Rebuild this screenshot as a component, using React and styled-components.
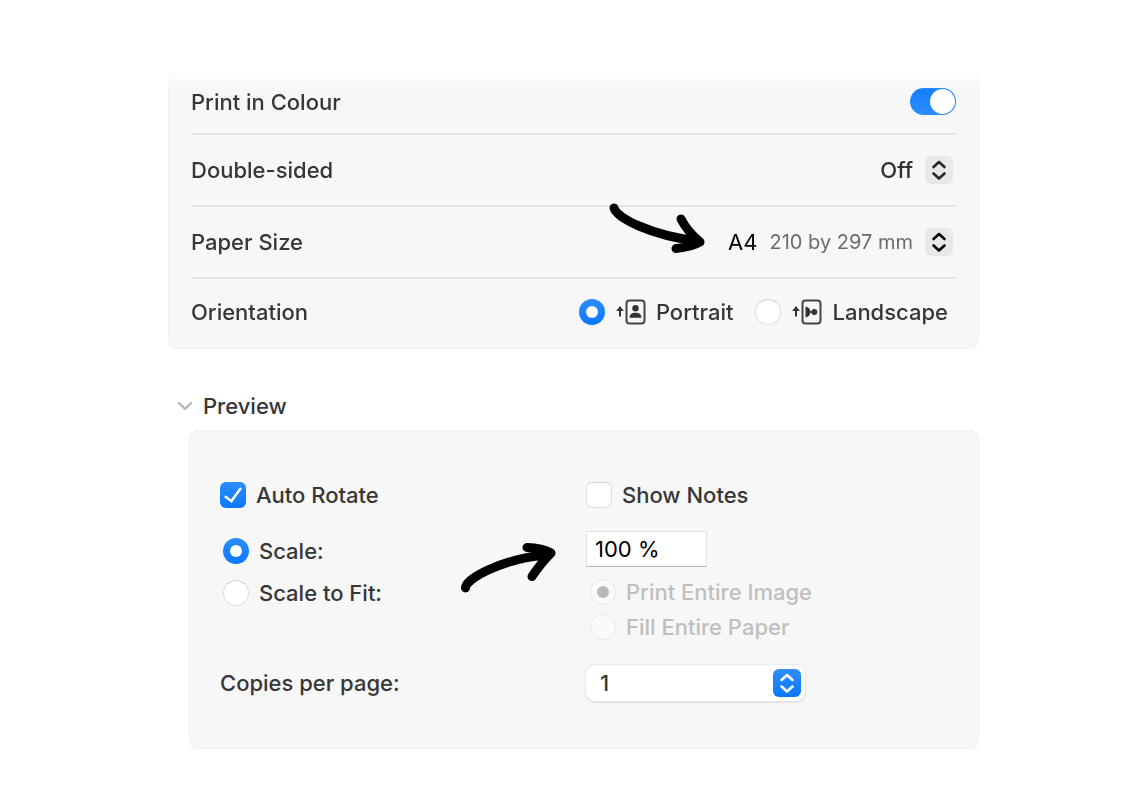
import styled, { createGlobalStyle } from 'styled-components';

const App = () => {
  return (
    <Page>
      <GlobalStyle />
      <Settings>
        <Row $short>
          <label htmlFor='colour'>Print in Colour</label>
          <Switch id='colour' type='checkbox' role='switch' defaultChecked />
        </Row>
        <Row>
          <label htmlFor='sides'>Double-sided</label>
          <Value>
            <PlainSelect id='sides' defaultValue='Off'>
              <option>Off</option>
            </PlainSelect>
            <Stepper>
              <Chevrons />
            </Stepper>
          </Value>
        </Row>
        <Row>
          <label htmlFor='paper'>Paper Size</label>
          <Value>
            <PaperArrow viewBox='0 0 120 65' aria-hidden='true'>
              <path d='M14 13C17 23 50 40 97 46M81 24Q87 36 100 47Q92 52 76 53.500' />
            </PaperArrow>
            <PlainSelect id='paper' defaultValue='A4' $strong>
              <option>A4</option>
            </PlainSelect>
            <Detail>210 by 297 mm</Detail>
            <Stepper $strong>
              <Chevrons />
            </Stepper>
          </Value>
        </Row>
        <Row role='radiogroup' aria-labelledby='orientation'>
          <span id='orientation'>Orientation</span>
          <Orientations>
            <Choice>
              <Radio type='radio' name='orientation' defaultChecked />
              <PageIcon />
              Portrait
            </Choice>
            <Choice>
              <Radio type='radio' name='orientation' />
              <PageIcon sideways />
              Landscape
            </Choice>
          </Orientations>
        </Row>
      </Settings>

      <Disclosure type='button' aria-expanded='true'>
        <svg viewBox='0 0 16 10' width='16' height='10' aria-hidden='true'>
          <path d='M2 2L8 8L14 2' />
        </svg>
        Preview
      </Disclosure>

      <Preview>
        <Choice>
          <Checkbox type='checkbox' defaultChecked />
          Auto Rotate
        </Choice>
        <Choice>
          <Checkbox type='checkbox' />
          Show Notes
        </Choice>
        <ScaleModes>
          <Choice>
            <Radio type='radio' name='scale' defaultChecked />
            Scale:
          </Choice>
          <Choice>
            <Radio type='radio' name='scale' />
            Scale to Fit:
          </Choice>
        </ScaleModes>
        <ScaleOptions>
          <ScaleArrow viewBox='0 0 140 80' aria-hidden='true'>
            <path d='M25.500 63C25 54 62 34 105 30M87 22.500Q102 23 111 28Q101 38 92 51.500' />
          </ScaleArrow>
          <ScaleInput type='text' aria-label='Scale' defaultValue='100 %' />
          <FitModes>
            <Choice $off>
              <Radio type='radio' name='fit' disabled defaultChecked />
              Print Entire Image
            </Choice>
            <Choice $off>
              <Radio type='radio' name='fit' disabled />
              Fill Entire Paper
            </Choice>
          </FitModes>
        </ScaleOptions>
        <CopiesLabel htmlFor='copies'>Copies per page:</CopiesLabel>
        <Popup>
          <PopupSelect id='copies' defaultValue='1'>
            <option>1</option>
          </PopupSelect>
          <PopupCap>
            <Chevrons />
          </PopupCap>
        </Popup>
      </Preview>
    </Page>
  );
};

const Chevrons = () => (
  <svg viewBox='0 0 28 28' aria-hidden='true'>
    <path d='M8.500 11L14 6L19.500 11M8.500 17.500L14 22.500L19.500 17.500' />
  </svg>
);

const PageIcon = ({ sideways }) => (
  <svg viewBox='0 0 31 26' width='31' height='26' aria-hidden='true'>
    <path d='M5 7L8.800 12H6V17.500H4V12H1.200Z' fill='#333333' />
    <rect
      x='11.500'
      y='1.500'
      width='18'
      height='23'
      rx='3'
      fill='none'
      stroke='#444444'
      strokeWidth='2'
    />
    {sideways ? (
      <g fill='#333333'>
        <path d='M14.500 7.500C17.500 8 19.300 10 19.300 12.200H21V13.800H19.300C19.300 16 17.500 18 14.500 18.500Z' />
        <circle cx='23.300' cy='13' r='3' />
      </g>
    ) : (
      <g fill='#333333'>
        <circle cx='20.500' cy='9.300' r='3.200' />
        <path d='M14.500 18.800C14.700 15.500 16.500 13.800 20.500 13.800S26.300 15.500 26.500 18.800Z' />
      </g>
    )}
  </svg>
);

const GlobalStyle = createGlobalStyle`
  *, *::before {
    box-sizing: border-box;
  }
  body {
    margin: 0;
    background: #ffffff;
    color: #363636;
    font: 500 22px/28px Inter, sans-serif;
  }
  input, select, button {
    font: inherit;
    color: inherit;
    margin: 0;
  }
`;

const Page = styled.main`
  padding: 70px 163px 60px 168px;
`;
const Settings = styled.section`
  padding: 0 22px 4px;
  border: 1px solid #f0f0f0;
  border-top: 0;
  border-radius: 0 0 9px 9px;
  background: #f7f7f7;
  mask-image: linear-gradient(transparent, #000000 20px);
`;
const Row = styled.div`
  display: flex;
  align-items: center;
  justify-content: space-between;
  height: ${(props) => (props.$short ? '65px' : '72px')};
  border-bottom: 2px solid #e5e5e5;

  &:last-child {
    height: 65px;
    border-bottom: 0;
  }
`;
const Value = styled.div`
  position: relative;
  display: flex;
  align-items: center;
  padding-right: 3px;
`;
const PlainSelect = styled.select`
  appearance: none;
  field-sizing: content;
  padding: 0;
  border: 0;
  background: none;
  color: ${(props) => (props.$strong ? '#000000' : '#303030')};
  font-weight: ${(props) => (props.$strong ? 400 : 500)};
`;
const Detail = styled.span`
  margin-left: 12px;
  color: #6c6c6c;
  font-size: 20px;
  font-weight: 400;
`;
const Stepper = styled.span`
  width: 28px;
  height: 28px;
  margin-left: 12px;
  border-radius: 6px;
  background: #e8e8e8;
  pointer-events: none;

  svg {
    display: block;
    fill: none;
    stroke: ${(props) => (props.$strong ? '#000000' : '#262626')};
    stroke-width: 2.6;
    stroke-linecap: round;
    stroke-linejoin: round;
  }
`;
const Arrow = styled.svg`
  position: absolute;
  fill: none;
  stroke: #000000;
  stroke-width: 9;
  stroke-linecap: round;
  stroke-linejoin: round;
  pointer-events: none;
`;
const PaperArrow = styled(Arrow)`
  width: 120px;
  height: 65px;
  right: calc(100% + 8px);
  bottom: -4px;
`;
const ScaleArrow = styled(Arrow)`
  width: 140px;
  height: 80px;
  right: calc(100% + 6px);
  top: 16px;
`;
const Switch = styled.input`
  appearance: none;
  width: 46px;
  height: 27px;
  padding: 1px;
  border-radius: 14px;
  background: #d8d8d8;

  &::before {
    content: '';
    display: block;
    width: 25px;
    height: 25px;
    border-radius: 50%;
    background: #ffffff;
  }
  &:checked {
    background: linear-gradient(#157efb, #2c8dff);
  }
  &:checked::before {
    margin-left: auto;
  }
`;
const Orientations = styled.div`
  display: flex;
  gap: 22px;
  padding-right: 8px;
`;
const Choice = styled.label`
  display: flex;
  align-items: center;
  gap: 10px;
  color: ${(props) => (props.$off ? '#bfbfbf' : 'inherit')};
`;
const Radio = styled.input`
  appearance: none;
  display: grid;
  place-items: center;
  flex: none;
  width: 26px;
  height: 26px;
  border: 1px solid #dedede;
  border-top-color: #d2d2d2;
  border-radius: 50%;
  background: #ffffff;

  &:checked {
    border: 0;
    background: linear-gradient(#2c8dff, #0a78ff);
  }
  &:checked::before {
    content: '';
    width: 12px;
    height: 12px;
    border-radius: 50%;
    background: #ffffff;
  }
  &:disabled {
    border: 1px solid #e9e9e9;
    background: #fafafa;
  }
  &:disabled:checked::before {
    background: #b9b9b9;
  }
`;
const Checkbox = styled.input`
  appearance: none;
  flex: none;
  width: 26px;
  height: 26px;
  border: 1px solid #dedede;
  border-top-color: #d2d2d2;
  border-radius: 6px;
  background: #ffffff;

  &:checked {
    border: 0;
    background: linear-gradient(#2c8dff, #0a78ff);
  }
  &:checked::before {
    content: '';
    display: block;
    width: 10px;
    height: 18px;
    margin: 2px 0 0 8px;
    border: solid #ffffff;
    border-width: 0 3px 3px 0;
    border-radius: 1px;
    transform: rotate(36deg);
  }
`;
const Disclosure = styled.button`
  display: flex;
  align-items: center;
  gap: 10px;
  margin-top: 43px;
  padding: 0 9px;
  border: 0;
  background: none;

  svg {
    fill: none;
    stroke: #b5b5b5;
    stroke-width: 2.4;
    stroke-linecap: round;
    stroke-linejoin: round;
  }
`;
const Preview = styled.section`
  display: grid;
  grid-template-columns: minmax(0, 366px) 1fr;
  align-items: start;
  margin: 10px 0 0 21px;
  padding: 50px 30px 47px;
  border: 1px solid #f0f0f0;
  border-radius: 9px;
  background: #f7f7f7;
`;
const ScaleModes = styled.div`
  display: grid;
  gap: 14px;
  padding: 28px 0 0 3px;
`;
const ScaleOptions = styled.div`
  position: relative;
  display: grid;
  gap: 11px;
  padding: 22px 0 24px;
`;
const ScaleInput = styled.input`
  width: 121px;
  height: 36px;
  padding: 0 8px;
  border: 1px solid #e2e2e2;
  border-bottom-color: #b4b4b4;
  background: #ffffff;
  color: #000000;
  font-weight: 400;
`;
const FitModes = styled.div`
  display: grid;
  gap: 7px;
  padding-left: 4px;
`;
const CopiesLabel = styled.label`
  line-height: 36px;
`;
const Popup = styled.div`
  position: relative;
  width: 219px;
`;
const PopupSelect = styled.select`
  appearance: none;
  display: block;
  width: 100%;
  height: 36px;
  padding: 0 44px 0 14px;
  border: 0;
  border-radius: 9px;
  background: #ffffff;
  box-shadow: 0 0 1px 1px #e9e9e9, 0 1px 2px #b8b8b8;
`;
const PopupCap = styled.span`
  position: absolute;
  top: 4px;
  right: 4px;
  width: 28px;
  height: 28px;
  border-radius: 6px;
  background: linear-gradient(#2c8dff, #0a78ff);
  pointer-events: none;

  svg {
    display: block;
    fill: none;
    stroke: #ffffff;
    stroke-width: 2.6;
    stroke-linecap: round;
    stroke-linejoin: round;
  }
`;

export default App;
